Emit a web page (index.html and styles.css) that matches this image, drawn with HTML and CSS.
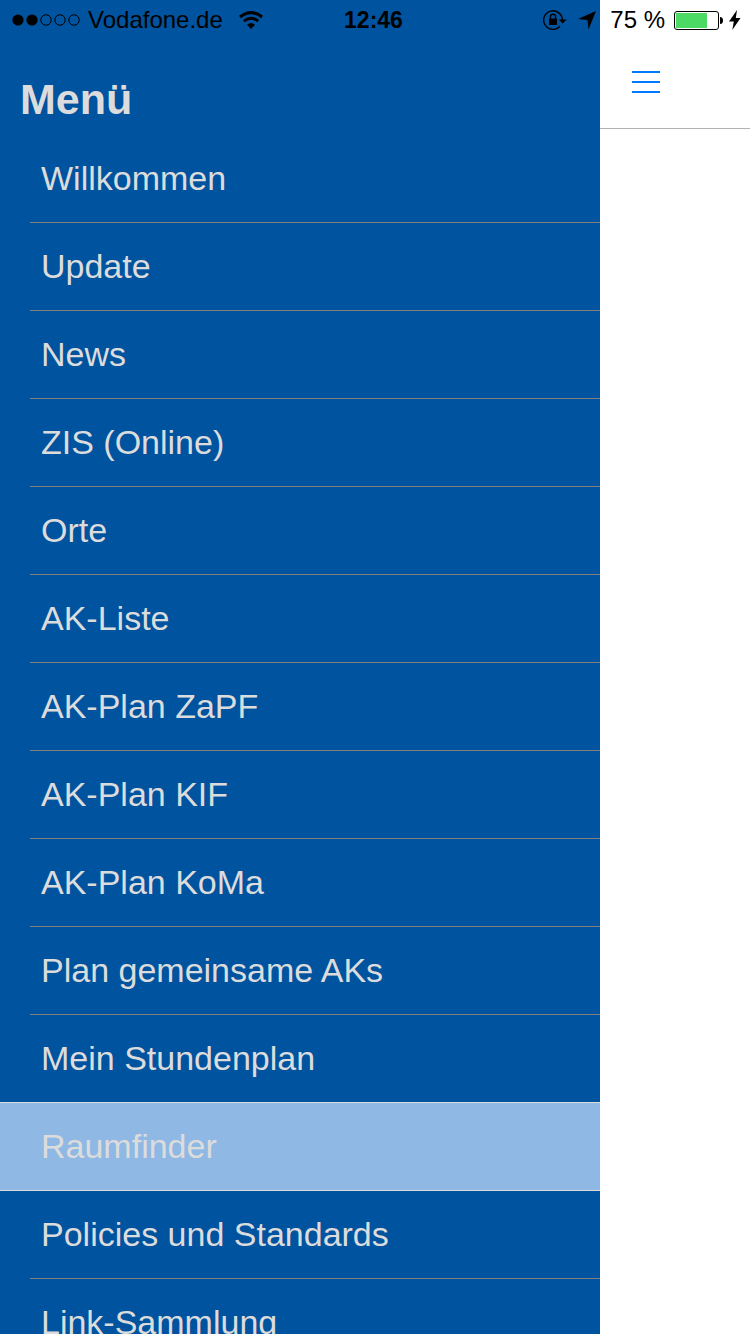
FILE: index.html
```html
<!DOCTYPE html>
<html lang="de">
<head>
<meta charset="utf-8">
<meta name="viewport" content="width=device-width, initial-scale=1">
<title>Menü</title>
<link rel="stylesheet" href="styles.css">
</head>
<body>
<div class="app">
  <header class="status">
    <div class="status-left">
      <svg class="signal" width="68" height="12" viewBox="0 0 68 12" aria-hidden="true">
        <circle cx="6" cy="6" r="5.6"/><circle cx="20" cy="6" r="5.6"/>
        <g fill="none" stroke="#000"><circle cx="34" cy="6" r="5.2"/><circle cx="48" cy="6" r="5.2"/><circle cx="62" cy="6" r="5.2"/></g>
      </svg>
      <span class="carrier">Vodafone.de</span>
      <svg width="24" height="18" viewBox="0 0 24 18" aria-hidden="true">
        <g fill="none" stroke="#000" stroke-width="3"><path d="M1 6Q12-2.800 23 6"/><path d="M4.800 10.200Q12 4.200 19.200 10.200"/></g>
        <path d="M12 18l-4-4.200Q12 10.400 16 13.800z"/>
      </svg>
    </div>
    <time class="clock">12:46</time>
    <div class="status-right">
      <svg width="24" height="20" viewBox="0 0 24 20" aria-hidden="true">
        <path d="M17 16.200A9.300 9.300 0 1 1 19.300 10" fill="none" stroke="#000" stroke-width="1.400"/>
        <path d="M15.800 9.500h7.800L19.700 13.600z"/>
        <rect x="6" y="8.500" width="8" height="6.500" rx=".6"/>
        <path d="M7.400 9V6.800a2.600 2.600 0 0 1 5.200 0V9" fill="none" stroke="#000" stroke-width="1.400"/>
      </svg>
      <svg class="location" width="18" height="20" viewBox="0 0 18 20" aria-hidden="true"><path d="M18 1L10.500 19.500 9.500 10 0 9z"/></svg>
      <span class="percent">75 %</span>
      <svg class="battery" width="49" height="20" viewBox="0 0 49 20" aria-hidden="true">
        <rect x=".5" y="1.500" width="44" height="18" rx="2.500" fill="none" stroke="#000"/>
        <rect x="2" y="3" width="31" height="15" fill="#4cd964"/>
        <path d="M46 7q3 0 3 3.500T46 14z"/>
      </svg>
      <svg width="12" height="20" viewBox="0 0 12 20" aria-hidden="true"><path d="M8 0L0 11.500h4.800L3.300 20 11.500 8H6.800z"/></svg>
    </div>
  </header>
  <nav class="drawer">
    <h1 class="title">Menü</h1>
    <ul class="menu">
      <li class="item"><a class="link" href="#">Willkommen</a></li>
      <li class="item"><a class="link" href="#">Update</a></li>
      <li class="item"><a class="link" href="#">News</a></li>
      <li class="item"><a class="link" href="#">ZIS (Online)</a></li>
      <li class="item"><a class="link" href="#">Orte</a></li>
      <li class="item"><a class="link" href="#">AK-Liste</a></li>
      <li class="item"><a class="link" href="#">AK-Plan ZaPF</a></li>
      <li class="item"><a class="link" href="#">AK-Plan KIF</a></li>
      <li class="item"><a class="link" href="#">AK-Plan KoMa</a></li>
      <li class="item"><a class="link" href="#">Plan gemeinsame AKs</a></li>
      <li class="item"><a class="link" href="#">Mein Stundenplan</a></li>
      <li class="item selected"><a class="link" href="#" aria-current="page">Raumfinder</a></li>
      <li class="item"><a class="link" href="#">Policies und Standards</a></li>
      <li class="item"><a class="link" href="#">Link-Sammlung</a></li>
    </ul>
  </nav>
  <main class="page">
    <div class="navbar">
      <button class="toggle" type="button" aria-label="Menü schließen">
        <svg width="28" height="22" viewBox="0 0 28 22" fill="#007aff" aria-hidden="true"><path d="M0 0h28v2H0zM0 10h28v2H0zM0 20h28v2H0z"/></svg>
      </button>
    </div>
  </main>
</div>
</body>
</html>
```
FILE: styles.css
```css
* { box-sizing: border-box; }

body {
  margin: 0;
  background: #fff;
  font-family: "Liberation Sans", Arial, sans-serif;
}

svg { display: block; flex: none; }

.app {
  position: relative;
  display: grid;
  grid-template-columns: 4fr 1fr;
  height: 100vh;
  overflow: hidden;
}

/* The status bar floats above both the drawer and the page. */
.status {
  position: absolute;
  top: 0;
  left: 0;
  right: 0;
  z-index: 1;
  display: grid;
  grid-template-columns: 1fr auto 1fr;
  align-items: center;
  height: 40px;
  padding: 0 9px 0 12px;
  font-size: 24px;
  line-height: 40px;
  color: #000;
  white-space: nowrap;
}

.status-left,
.status-right {
  display: flex;
  align-items: center;
}

.status-right { justify-content: flex-end; }
.signal { margin-right: 8px; }
.carrier { margin-right: 16px; }
.clock { padding-right: 6px; font-size: 23px; font-weight: bold; }
.location { margin: 0 14px 0 11px; }
.battery { margin: 0 6px 0 9px; }

.drawer {
  min-width: 0;
  min-height: 0;
  overflow: hidden;
  background: #00539f;
  color: #dcdcdc;
}

.title {
  margin: 0;
  padding: 75px 20px 12px;
  font-size: 43px;
  line-height: 48px;
}

.menu {
  margin: 0;
  padding: 0;
  list-style: none;
}

.item { padding-left: 30px; }

.link {
  display: block;
  padding-left: 11px;
  border-bottom: 1px solid #7f7f7f;
  font-size: 34px;
  line-height: 87px;
  color: inherit;
  text-decoration: none;
  white-space: nowrap;
}

.selected {
  margin-top: -1px;
  border: solid #dcdcdc;
  border-width: 1px 0;
  background: #8fb8e4;
}

.selected .link { border-bottom: 0; }

.page { min-width: 0; background: #fff; }

.navbar {
  display: flex;
  align-items: flex-end;
  height: 129px;
  padding: 0 20px 24px;
  border-bottom: 1px solid #b2b2b2;
}

.toggle {
  padding: 11px 12px;
  border: 0;
  background: none;
}
```
